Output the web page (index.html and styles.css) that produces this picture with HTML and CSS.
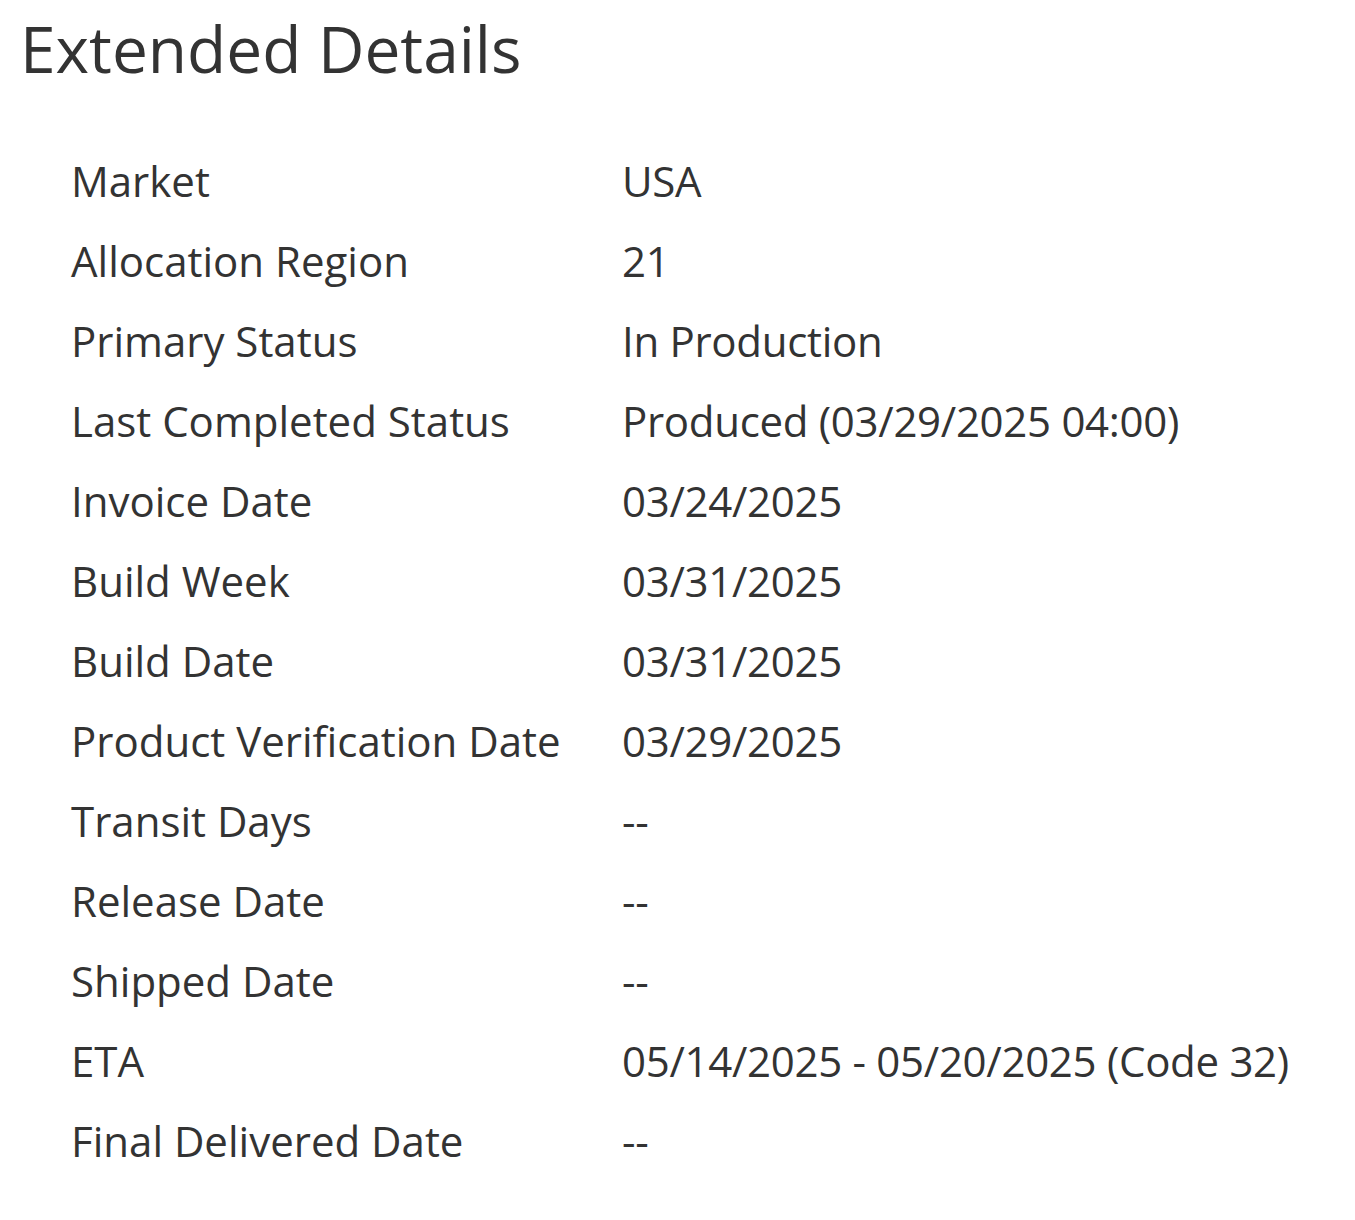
FILE: index.html
```html
<!DOCTYPE html>
<html lang="en">
  <head>
    <meta charset="UTF-8" />
    <meta name="viewport" content="width=device-width, initial-scale=1.0" />
    <title>Extended Details</title>
    <link rel="stylesheet" href="styles.css">
  </head>
  <body>
    <h1>Extended Details</h1>

    <dl class="details">
      <div class="row"><dt>Market</dt><dd>USA</dd></div>
      <div class="row"><dt>Allocation Region</dt><dd>21</dd></div>
      <div class="row"><dt>Primary Status</dt><dd>In Production</dd></div>
      <div class="row"><dt>Last Completed Status</dt><dd>Produced (03/29/2025 04:00)</dd></div>
      <div class="row"><dt>Invoice Date</dt><dd>03/24/2025</dd></div>
      <div class="row"><dt>Build Week</dt><dd>03/31/2025</dd></div>
      <div class="row"><dt>Build Date</dt><dd>03/31/2025</dd></div>
      <div class="row"><dt>Product Verification Date</dt><dd>03/29/2025</dd></div>
      <div class="row"><dt>Transit Days</dt><dd>--</dd></div>
      <div class="row"><dt>Release Date</dt><dd>--</dd></div>
      <div class="row"><dt>Shipped Date</dt><dd>--</dd></div>
      <div class="row"><dt>ETA</dt><dd>05/14/2025 - 05/20/2025 (Code 32)</dd></div>
      <div class="row"><dt>Final Delivered Date</dt><dd>--</dd></div>
    </dl>
  </body>
</html>
```

FILE: styles.css
```css
body {
  font-family: "Open Sans", Arial, sans-serif;
  color: #333;
  background: #fff;
  margin: 0;
  padding: 0 20px;
}

h1 {
  font-size: 64px;
  font-weight: 400;
  line-height: 1;
  margin: 0;
  padding-top: 17px;
  height: 124px;
}

.details {
  margin: 0;
  padding-left: 51px;
}

.row {
  display: grid;
  grid-template-columns: 551px 1fr;
  height: 80px;
  align-items: center;
  font-size: 42px;
}

dt,
dd {
  margin: 0;
  line-height: 1;
}

dd {
  letter-spacing: -0.3px;
}
```
